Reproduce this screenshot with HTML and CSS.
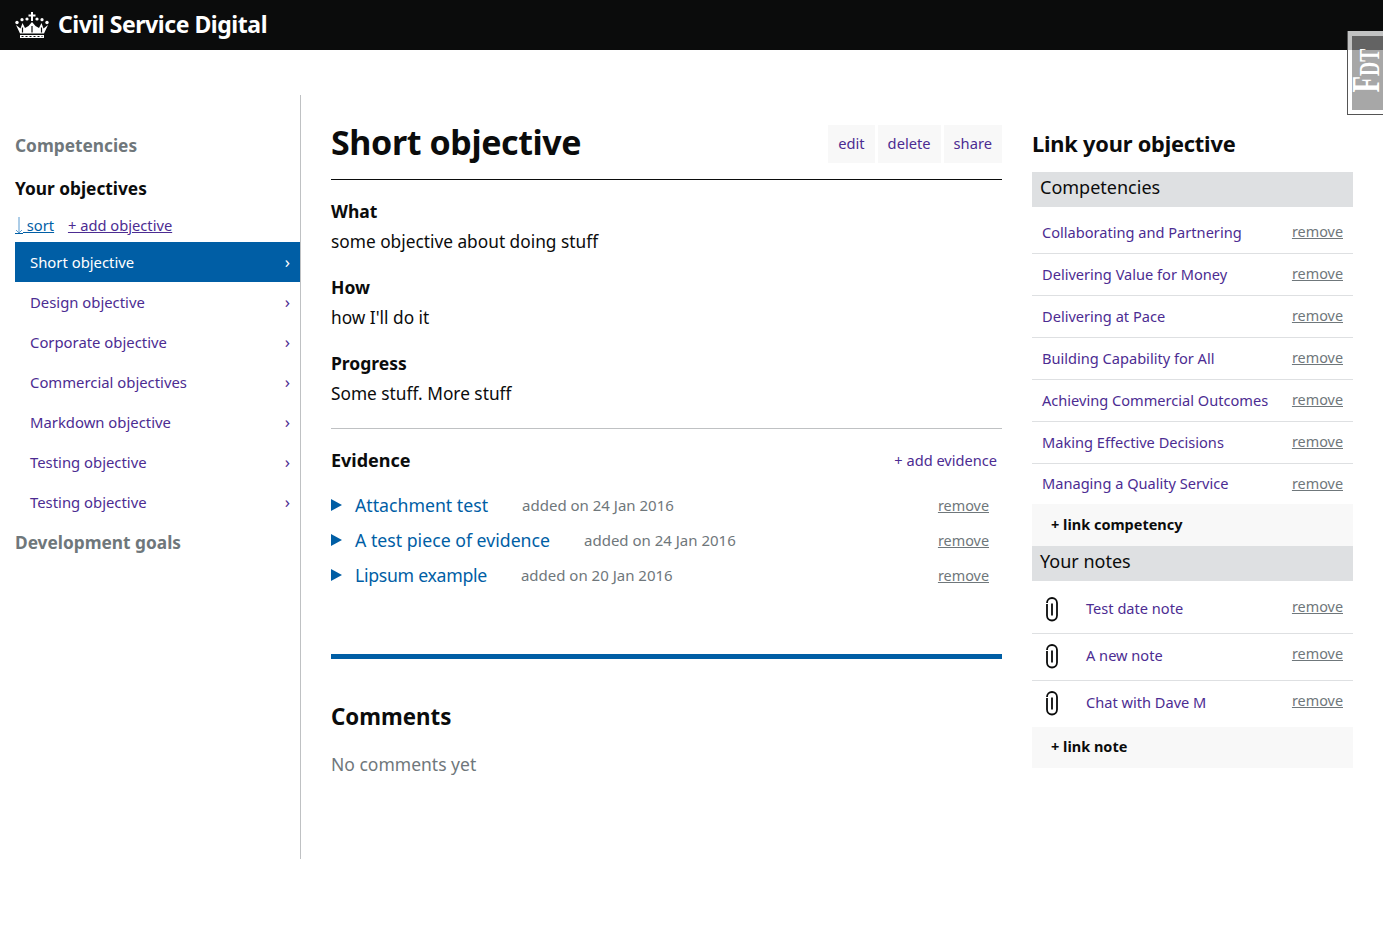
FILE: index.html
```html
<!doctype html>
<html lang="en">
  <head>
    <meta charset="utf-8">
    <title>Civil Service Digital</title>
    <link rel="stylesheet" href="styles.css">
  </head>
  <body>
    <header class="site-header">
      <svg class="crown" viewBox="0 0 34 26" width="34" height="26" aria-hidden="true">
        <g fill="#fff">
          <path d="M16 0h2v2.500h2.500v2H18V9h-2V4.500h-2.500v-2H16z"/>
          <circle cx="12" cy="7" r="1.600"/><circle cx="22" cy="7" r="1.600"/>
          <circle cx="7" cy="7.700" r="1.600"/><circle cx="27" cy="7.700" r="1.600"/>
          <circle cx="2" cy="10.500" r="1.700"/><circle cx="32" cy="10.500" r="1.700"/>
          <path d="M1 13l4 8.500h24l4-8.500-4.500 3.500L26.500 11 24 16l-3.500-2L17 10l-3.500 4L10 16 7.500 11 5.500 16.500z"/>
          <rect x="5" y="23" width="24" height="3"/>
        </g>
        <path d="M7.500 15.500v5M17 14v6.500M26.500 15.500v5" stroke="#0b0c0c" stroke-width="1.200"/>
        <path d="M6.500 24.500h21" stroke="#0b0c0c" stroke-width="1" stroke-dasharray="2 2"/>
      </svg>
      <span class="site-title">Civil Service Digital</span>
    </header>
    <div class="env-badge"><div class="env-inner"><span><b>F</b>DT</span></div></div>

    <div class="layout">
      <nav class="sidebar">
        <h2 class="nav-head muted">Competencies</h2>
        <h2 class="nav-head current">Your objectives</h2>
        <div class="nav-actions">
          <a class="sort" href="#"><svg class="sort-arrow" viewBox="0 0 8 18" width="8" height="18" aria-hidden="true"><path d="M4 0v16M1 13l3 3 3-3" fill="none" stroke="#5b9bd0" stroke-width="1"/><path d="M0 16.500h8" stroke="#005ea5" stroke-width="1"/></svg> sort</a>
          <a href="#">+ add objective</a>
        </div>
        <ul class="objective-list">
          <li class="active"><a href="#">Short objective</a></li>
          <li><a href="#">Design objective</a></li>
          <li><a href="#">Corporate objective</a></li>
          <li><a href="#">Commercial objectives</a></li>
          <li><a href="#">Markdown objective</a></li>
          <li><a href="#">Testing objective</a></li>
          <li><a href="#">Testing objective</a></li>
        </ul>
        <h2 class="nav-head muted dev">Development goals</h2>
      </nav>

      <main class="main">
        <div class="title-row">
          <h1>Short objective</h1>
          <div class="title-actions">
            <a href="#">edit</a>
            <a href="#">delete</a>
            <a href="#">share</a>
          </div>
        </div>

        <section class="details">
          <h3>What</h3>
          <p>some objective about doing stuff</p>
          <h3>How</h3>
          <p>how I'll do it</p>
          <h3>Progress</h3>
          <p>Some stuff. More stuff</p>
        </section>

        <section class="evidence">
          <div class="evidence-head">
            <h3>Evidence</h3>
            <a href="#">+ add evidence</a>
          </div>
          <div class="evidence-row">
            <span class="arrow"></span><a class="evidence-name" href="#">Attachment test</a>
            <span class="added">added on 24 Jan 2016</span>
            <a class="remove" href="#">remove</a>
          </div>
          <div class="evidence-row">
            <span class="arrow"></span><a class="evidence-name" href="#">A test piece of evidence</a>
            <span class="added">added on 24 Jan 2016</span>
            <a class="remove" href="#">remove</a>
          </div>
          <div class="evidence-row">
            <span class="arrow"></span><a class="evidence-name tight" href="#">Lipsum example</a>
            <span class="added">added on 20 Jan 2016</span>
            <a class="remove" href="#">remove</a>
          </div>
        </section>

        <section class="comments">
          <h2>Comments</h2>
          <p>No comments yet</p>
        </section>
      </main>

      <aside class="links">
        <h2>Link your objective</h2>
        <div class="links-head">Competencies</div>
        <ul class="link-list">
          <li><a href="#">Collaborating and Partnering</a><a class="remove" href="#">remove</a></li>
          <li><a href="#">Delivering Value for Money</a><a class="remove" href="#">remove</a></li>
          <li><a href="#">Delivering at Pace</a><a class="remove" href="#">remove</a></li>
          <li><a href="#">Building Capability for All</a><a class="remove" href="#">remove</a></li>
          <li><a href="#">Achieving Commercial Outcomes</a><a class="remove" href="#">remove</a></li>
          <li><a href="#">Making Effective Decisions</a><a class="remove" href="#">remove</a></li>
          <li><a href="#">Managing a Quality Service</a><a class="remove" href="#">remove</a></li>
        </ul>
        <div class="link-add">+ link competency</div>
        <div class="links-head">Your notes</div>
        <ul class="note-list">
          <li>
            <svg class="clip" viewBox="0 0 14 25" width="14" height="25" aria-hidden="true"><path d="M2 7v11.500a5 5 0 0 0 10 0V6a5 5 0 0 0-10 0M7 6.500v12" fill="none" stroke="#0b0c0c" stroke-width="1.800"/></svg>
            <a href="#">Test date note</a><a class="remove" href="#">remove</a>
          </li>
          <li>
            <svg class="clip" viewBox="0 0 14 25" width="14" height="25" aria-hidden="true"><path d="M2 7v11.500a5 5 0 0 0 10 0V6a5 5 0 0 0-10 0M7 6.500v12" fill="none" stroke="#0b0c0c" stroke-width="1.800"/></svg>
            <a href="#">A new note</a><a class="remove" href="#">remove</a>
          </li>
          <li>
            <svg class="clip" viewBox="0 0 14 25" width="14" height="25" aria-hidden="true"><path d="M2 7v11.500a5 5 0 0 0 10 0V6a5 5 0 0 0-10 0M7 6.500v12" fill="none" stroke="#0b0c0c" stroke-width="1.800"/></svg>
            <a href="#">Chat with Dave M</a><a class="remove" href="#">remove</a>
          </li>
        </ul>
        <div class="link-add last">+ link note</div>
      </aside>
    </div>
  </body>
</html>
```

FILE: styles.css
```css
html, body { margin: 0; padding: 0; }
body {
  font-family: "Noto Sans", "Open Sans", sans-serif;
  font-size: 16px;
  color: #0b0c0c;
  background: #fff;
  min-height: 937px;
}
a { color: #4c2c92; text-decoration: none; }
h1, h2, h3, p, ul { margin: 0; padding: 0; }
ul { list-style: none; }

/* header */
.site-header {
  height: 50px;
  box-sizing: border-box;
  background: #0b0c0c;
  display: flex;
  align-items: center;
  padding: 0 0 3px 15px;
  color: #fff;
}
.crown { margin: 3px 9px 0 0; }
.site-title { font-size: 23px; font-weight: 700; letter-spacing: -0.45px; }

.env-badge {
  position: absolute;
  top: 31px;
  right: 0;
  width: 36px;
  height: 84px;
  box-sizing: border-box;
  border: 1px solid #555;
  border-width: 0 0 1px 1px;
}
.env-inner {
  height: 100%;
  box-sizing: border-box;
  border: solid rgba(255, 255, 255, 0.75);
  border-width: 5px 0 4px 4px;
  background: rgba(133, 133, 133, 0.72);
  background-clip: padding-box;
  display: flex;
  justify-content: center;
  padding-bottom: 5px;
  align-items: center;
}
.env-inner span {
  color: #fff;
  font-family: "Liberation Serif", serif;
  font-weight: 700;
  font-size: 29px;
  line-height: 32px;
  transform: rotate(-90deg) scaleX(0.68);
}
.env-inner b { font-size: 40px; }

/* page columns */
.layout {
  display: flex;
  padding: 45px 30px 0 15px;
}

.sidebar {
  width: 285px;
  height: 725px;
  border-right: 1px solid #bfc1c3;
  padding-top: 39px;
}
.nav-head { font-size: 17.3px; font-weight: 700; line-height: 24px; }
.nav-head.muted { color: #6f777b; }
.nav-head.current { margin-top: 19px; }
.nav-head.dev { margin-top: 9px; }
.nav-actions { margin-top: 13px; height: 28px; font-size: 14.7px; line-height: 22px; }
.nav-actions a { text-decoration: underline; margin-right: 10px; }
.nav-actions .sort { color: #005ea5; }
.sort-arrow { vertical-align: -4px; }

.objective-list li a {
  display: block;
  height: 40px;
  line-height: 40px;
  padding-left: 15px;
  font-size: 14.85px;
  position: relative;
}
.objective-list li a::after {
  content: "›";
  position: absolute;
  right: 10px;
  top: 0;
  font-size: 17px;
}
.objective-list li.active a { background: #005ea5; color: #fff; }

.main {
  width: 671px;
  margin-left: 30px;
  padding-top: 24px;
}
.title-row {
  display: flex;
  justify-content: space-between;
  align-items: flex-start;
  height: 60px;
  border-bottom: 1px solid #0b0c0c;
}
.title-row h1 { font-size: 34px; line-height: 46px; font-weight: 700; letter-spacing: -0.4px; }
.title-actions { display: flex; gap: 3px; padding-top: 6px; }
.title-actions a {
  background: #f8f8f8;
  height: 38px;
  line-height: 36px;
  padding: 0 10px;
  font-size: 14.7px;
}

.details { padding: 19px 0 22px; border-bottom: 1px solid #bfc1c3; }
.details h3 { font-size: 17.5px; line-height: 24px; font-weight: 700; }
.details p { font-size: 17.3px; line-height: 24px; margin: 7px 0 21px; }
.details p:last-child { margin-bottom: 0; }

.evidence { padding-top: 19px; height: 206px; border-bottom: 5px solid #005ea5; }
.evidence-head { display: flex; justify-content: space-between; padding-right: 5px; height: 24px; line-height: 24px; font-size: 14.6px; margin-bottom: 15px; }
.evidence-head h3 { font-size: 18px; font-weight: 700; }
.evidence-row { display: flex; align-items: center; height: 35px; }
.arrow {
  width: 0;
  height: 0;
  border-left: 11px solid #005ea5;
  border-top: 6px solid transparent;
  border-bottom: 6px solid transparent;
  margin-right: 13px;
}
.evidence-name { color: #005ea5; font-size: 17.7px; }
.evidence-name.tight { letter-spacing: -0.3px; }
.added { color: #6f777b; font-size: 15px; margin-left: 34px; }
.evidence-row .remove { margin: 2px 13px 0 auto; }
.remove { color: #6f777b; text-decoration: underline; font-size: 14.4px; }

.comments { padding-top: 42px; }
.comments h2 { font-size: 22.3px; line-height: 31px; font-weight: 700; }
.comments p { font-size: 17.5px; line-height: 24px; color: #6f777b; margin-top: 20px; }

.links { width: 321px; margin-left: 30px; padding-top: 33px; }
.links h2 { font-size: 21.8px; line-height: 32px; font-weight: 700; margin-bottom: 12px; letter-spacing: -0.2px; }
.links-head { background: #dee0e2; height: 35px; line-height: 31px; padding-left: 8px; font-size: 18px; }
.link-list li {
  display: flex;
  justify-content: space-between;
  align-items: center;
  height: 39px;
  border-bottom: 1px solid #dee0e2;
  padding: 0 10px 2px;
  font-size: 14.6px;
}
.link-list li:first-child { height: 47px; padding-top: 3px; padding-bottom: 0; box-sizing: border-box; }
.link-list li:last-child { height: 38px; border-bottom: 0; }
.link-add { background: #f8f8f8; height: 42px; line-height: 41px; padding-left: 19px; font-size: 14.5px; font-weight: 700; }
.link-add.last { height: 41px; line-height: 39px; }
.note-list li {
  display: flex;
  align-items: center;
  height: 42px;
  border-bottom: 1px solid #dee0e2;
  padding: 0 10px 4px 13px;
  font-size: 14.6px;
}
.note-list li:first-child { height: 53px; padding: 2px 10px 0 13px; box-sizing: border-box; }
.note-list li:last-child { border-bottom: 0; }
.clip { margin: 3px 27px 0 0; }
.note-list .remove { margin-left: auto; margin-top: -3px; }
```
